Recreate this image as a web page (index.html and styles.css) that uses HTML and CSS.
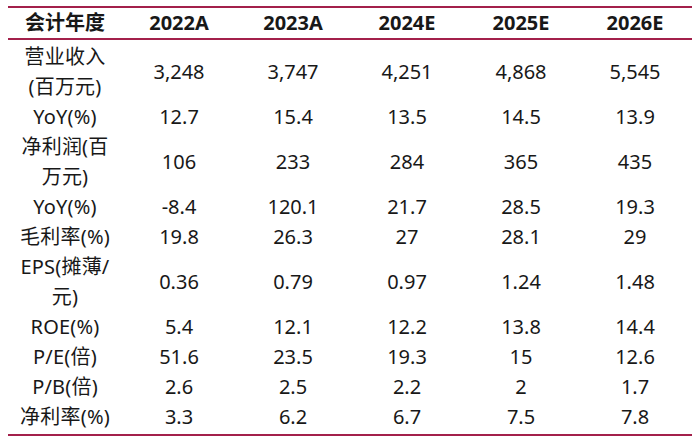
FILE: index.html
```html
<!DOCTYPE html>
<html lang="zh-CN">
<head>
<meta charset="utf-8">
<link rel="stylesheet" href="styles.css">
</head>
<body>
<table class="fin">
  <thead>
    <tr>
      <th class="label">会计年度</th>
      <th>2022A</th>
      <th>2023A</th>
      <th>2024E</th>
      <th>2025E</th>
      <th>2026E</th>
    </tr>
  </thead>
  <tbody>
    <tr class="first">
      <td class="label">营业收入<br>(百万元)</td>
      <td>3,248</td><td>3,747</td><td>4,251</td><td>4,868</td><td>5,545</td>
    </tr>
    <tr>
      <td class="label">YoY(%)</td>
      <td>12.7</td><td>15.4</td><td>13.5</td><td>14.5</td><td>13.9</td>
    </tr>
    <tr>
      <td class="label">净利润(百<br>万元)</td>
      <td>106</td><td>233</td><td>284</td><td>365</td><td>435</td>
    </tr>
    <tr>
      <td class="label">YoY(%)</td>
      <td>-8.4</td><td>120.1</td><td>21.7</td><td>28.5</td><td>19.3</td>
    </tr>
    <tr>
      <td class="label">毛利率(%)</td>
      <td>19.8</td><td>26.3</td><td>27</td><td>28.1</td><td>29</td>
    </tr>
    <tr>
      <td class="label">EPS(摊薄/<br>元)</td>
      <td>0.36</td><td>0.79</td><td>0.97</td><td>1.24</td><td>1.48</td>
    </tr>
    <tr>
      <td class="label">ROE(%)</td>
      <td>5.4</td><td>12.1</td><td>12.2</td><td>13.8</td><td>14.4</td>
    </tr>
    <tr>
      <td class="label">P/E(倍)</td>
      <td>51.6</td><td>23.5</td><td>19.3</td><td>15</td><td>12.6</td>
    </tr>
    <tr>
      <td class="label">P/B(倍)</td>
      <td>2.6</td><td>2.5</td><td>2.2</td><td>2</td><td>1.7</td>
    </tr>
    <tr class="last">
      <td class="label">净利率(%)</td>
      <td>3.3</td><td>6.2</td><td>6.7</td><td>7.5</td><td>7.8</td>
    </tr>
  </tbody>
</table>
</body>
</html>
```

FILE: styles.css
```css
html, body {
  margin: 0;
  padding: 0;
  background: #ffffff;
}

body {
  padding: 6px 8px 0 8px;
  font-family: "Noto Sans", "Noto Sans CJK SC", sans-serif;
  color: #181818;
}

.fin {
  width: 684px;
  border-collapse: collapse;
  table-layout: fixed;
  border-bottom: 2px solid #a3204b;
}

.fin th,
.fin td {
  padding: 0;
  text-align: center;
  vertical-align: middle;
  font-size: 20px;
  width: 114px;
}

.fin thead tr {
  border-top: 2px solid #a3204b;
  border-bottom: 2px solid #a3204b;
}

.fin th {
  height: 30px;
  line-height: 30px;
  font-weight: 700;
}

.fin td {
  line-height: 30px;
  font-weight: 400;
}

.fin td.label {
  letter-spacing: 0.2px;
}

.fin .first td {
  padding-top: 2px;
}

.fin .last td {
  padding-bottom: 2px;
}
```
